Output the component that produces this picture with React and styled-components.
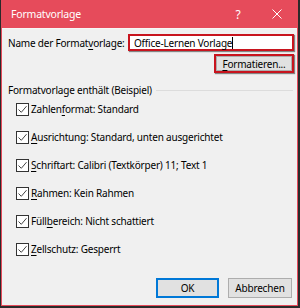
import React from "react";
import styled, { createGlobalStyle } from "styled-components";

const GlobalStyle = createGlobalStyle`
  * { box-sizing: border-box; }
  html, body { margin: 0; padding: 0; background: #1e1e1e; }
  body {
    font-family: "Noto Sans", "Open Sans", sans-serif;
    font-size: 10px;
    letter-spacing: -0.2px;
    color: #000;
  }
`;

const accent = "#e64b5b";

const Frame = styled.div`
  width: 300px;
  height: 308px;
  padding: 0 2px 2px 1px;
  background: #2a2a2a;
`;

const Dialog = styled.div`
  width: 100%;
  height: 100%;
  display: flex;
  flex-direction: column;
  background: #f0f0f0;
  border: 1px solid ${accent};
  border-top: none;
`;

const TitleBar = styled.div`
  height: 29px;
  flex-shrink: 0;
  display: flex;
  align-items: center;
  background: ${accent};
  color: #fff;
  padding-left: 9px;
  border-bottom: 1px solid #f6f6f6;
`;

const Title = styled.span`
  flex: 1;
  font-size: 10.5px;
`;

const TitleButton = styled.span`
  width: ${(p) => p.$w}px;
  display: flex;
  justify-content: center;
  align-items: center;
  font-size: 12px;
  color: #fff;
`;

const Body = styled.div`
  flex: 1;
  display: flex;
  flex-direction: column;
  padding: 5px 3px 0 6px;
`;

const NameRow = styled.div`
  display: flex;
  align-items: center;
  justify-content: space-between;
  height: 17px;
  white-space: nowrap;
`;

const Highlight = styled.div`
  border: 2px solid #c8141e;
  box-shadow: 1px 1px 1px rgba(0, 0, 0, 0.45);
`;

const NameInput = styled.div`
  width: 162px;
  height: 13px;
  background: #fff;
  display: flex;
  align-items: center;
  padding-left: 4px;
  white-space: nowrap;
`;

const Caret = styled.span`
  display: inline-block;
  width: 1px;
  height: 12px;
  background: #000;
`;

const ButtonRow = styled.div`
  display: flex;
  justify-content: flex-end;
  margin-top: ${(p) => p.$top}px;
  padding-right: ${(p) => p.$right || 0}px;
  gap: ${(p) => p.$gap || 0}px;
`;

const SmallButton = styled.div`
  width: 76px;
  height: 15px;
  background: #e1e1e1;
  border: 1px solid #adadad;
  display: flex;
  align-items: center;
  justify-content: center;
  white-space: nowrap;
`;

const Key = styled.span`
  text-decoration: underline;
  text-underline-offset: 2px;
`;

const Section = styled.div`
  display: flex;
  align-items: center;
  margin-top: 11px;
  height: 12px;
  gap: 4px;
  white-space: nowrap;
`;

const Rule = styled.div`
  flex: 1;
  height: 1px;
  margin-right: 1px;
  background: #dcdcdc;
`;

const List = styled.div`
  display: flex;
  flex-direction: column;
  padding-left: 8px;
  margin-top: -1px;
`;

const Row = styled.label`
  display: flex;
  align-items: center;
  height: 28px;
  gap: 2px;
  white-space: nowrap;
`;

const Box = styled.span`
  width: 13px;
  height: 13px;
  border: 1px solid #333;
  background: #fff;
  display: flex;
  align-items: center;
  justify-content: center;
`;

const Footer = styled.div`
  margin-top: auto;
  padding-bottom: 7px;
`;

const DialogButton = styled.div`
  width: ${(p) => p.$w}px;
  height: 20px;
  display: flex;
  align-items: center;
  justify-content: center;
  background: #e1e1e1;
  border: ${(p) => (p.$primary ? "2px solid #0078d7" : "1px solid #adadad")};
`;

const Check = () => (
  <svg width="11" height="11" viewBox="0 0 11 11">
    <path d="M1.5 5.5 L4.3 8.3 L9.5 2.2" fill="none" stroke="#444" strokeWidth="1" />
  </svg>
);

const CloseIcon = () => (
  <svg width="10" height="10" viewBox="0 0 10 10">
    <path d="M0.5 0.5 L9.5 9.5 M9.5 0.5 L0.5 9.5" stroke="#fff" strokeWidth="1" />
  </svg>
);

const items = [
  ["Zahlen", "f", "ormat: Standard"],
  ["", "A", "usrichtung: Standard, unten ausgerichtet"],
  ["", "S", "chriftart: Calibri (Textkörper) 11; Text 1"],
  ["", "R", "ahmen: Kein Rahmen"],
  ["Füll", "b", "ereich: Nicht schattiert"],
  ["", "Z", "ellschutz: Gesperrt"],
];

export default function App() {
  return (
    <Frame>
      <GlobalStyle />
      <Dialog>
        <TitleBar>
          <Title>Formatvorlage</Title>
          <TitleButton $w={38}>?</TitleButton>
          <TitleButton $w={40}>
            <CloseIcon />
          </TitleButton>
        </TitleBar>
        <Body>
          <NameRow>
            <span>
              Name der Format<Key>v</Key>orlage:
            </span>
            <Highlight>
              <NameInput>
                Office-Lernen Vorlage<Caret />
              </NameInput>
            </Highlight>
          </NameRow>
          <ButtonRow $top={3}>
            <Highlight>
              <SmallButton>
                <span>
                  <Key>F</Key>ormatieren...
                </span>
              </SmallButton>
            </Highlight>
          </ButtonRow>
          <Section>
            <span>Formatvorlage enthält (Beispiel)</span>
            <Rule />
          </Section>
          <List>
            {items.map(([pre, k, post]) => (
              <Row key={k + post}>
                <Box>
                  <Check />
                </Box>
                <span>
                  {pre}
                  <Key>{k}</Key>
                  {post}
                </span>
              </Row>
            ))}
          </List>
          <Footer>
            <ButtonRow $top={0} $gap={9} $right={2}>
              <DialogButton $w={63} $primary>
                OK
              </DialogButton>
              <DialogButton $w={64}>Abbrechen</DialogButton>
            </ButtonRow>
          </Footer>
        </Body>
      </Dialog>
    </Frame>
  );
}
